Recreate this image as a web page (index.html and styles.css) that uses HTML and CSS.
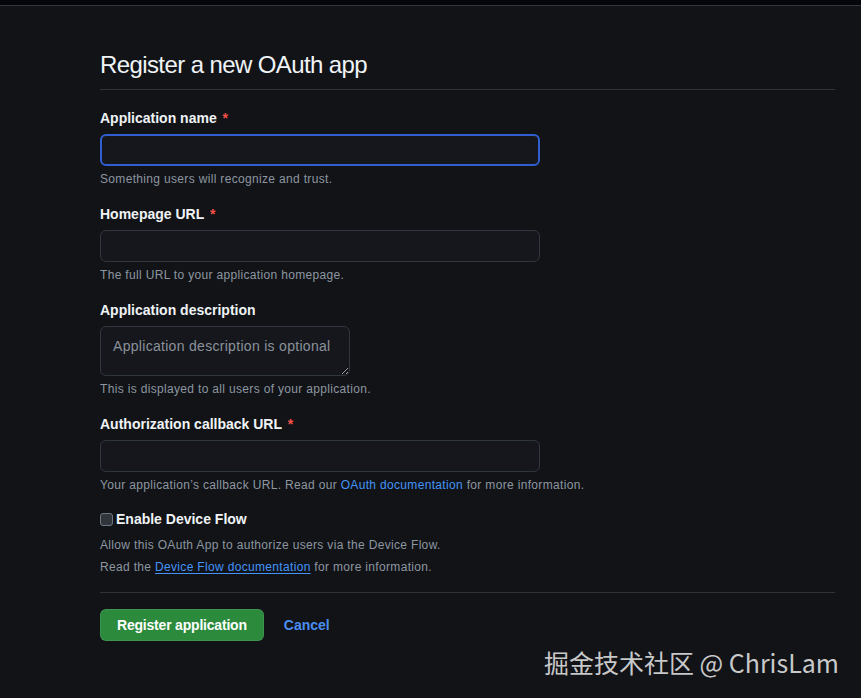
FILE: index.html
```html
<!DOCTYPE html>
<html lang="en">
<head>
<meta charset="utf-8">
<title>Register a new OAuth app</title>
<link rel="stylesheet" href="styles.css">
</head>
<body>
<div class="topbar"></div>
<main class="page">
  <h2 class="title">Register a new OAuth app</h2>
  <form class="form">
    <div class="group">
      <label class="label">Application name <span class="req">*</span></label>
      <input class="input input-focus" type="text">
      <p class="note">Something users will recognize and trust.</p>
    </div>
    <div class="group">
      <label class="label">Homepage URL <span class="req">*</span></label>
      <input class="input" type="text">
      <p class="note">The full URL to your application homepage.</p>
    </div>
    <div class="group">
      <label class="label">Application description</label>
      <textarea class="textarea" placeholder="Application description is optional"></textarea>
      <p class="note">This is displayed to all users of your application.</p>
    </div>
    <div class="group group-last">
      <label class="label">Authorization callback URL <span class="req">*</span></label>
      <input class="input" type="text">
      <p class="note">Your application’s callback URL. Read our <a class="link" href="#">OAuth documentation</a> for more information.</p>
    </div>
    <div class="group check-group">
      <label class="check-label"><input class="checkbox" type="checkbox">Enable Device Flow</label>
      <p class="note note-first">Allow this OAuth App to authorize users via the Device Flow.</p>
      <p class="note note-second">Read the <a class="link link-under" href="#">Device Flow documentation</a> for more information.</p>
    </div>
    <div class="actions">
      <button class="btn-primary" type="button">Register application</button>
      <a class="btn-cancel" href="#">Cancel</a>
    </div>
  </form>
</main>
<div class="watermark">掘金技术社区 @ ChrisLam</div>
</body>
</html>
```

FILE: styles.css
```css
* { box-sizing: border-box; }
html, body { margin: 0; padding: 0; }
body {
  background: #111317;
  color: #e6edf3;
  font-family: "Liberation Sans", Arial, sans-serif;
  font-size: 14px;
  height: 698px;
  overflow: hidden;
  position: relative;
}
.topbar {
  height: 6px;
  background: #05060b;
  border-bottom: 1px solid #34373e;
}
.page {
  width: 735px;
  margin-left: 100px;
  padding-top: 41px;
}
.title {
  margin: 0;
  font-size: 24px;
  font-weight: 400;
  line-height: 36px;
  letter-spacing: -0.6px;
  padding-bottom: 6px;
  border-bottom: 1px solid #30343a;
  color: #f0f3f6;
}
.form { padding-top: 18px; }
.group { margin-bottom: 16px; display: flex; flex-direction: column; align-items: flex-start; }
.group-last { margin-bottom: 15px; }
.label {
  font-weight: 700;
  line-height: 20px;
  margin-bottom: 6px;
  color: #f0f3f6;
}
.req { color: #f85149; margin-left: 2px; }
.input {
  width: 440px;
  height: 32px;
  background: #15171c;
  border: 1px solid #30363d;
  border-radius: 6px;
  color: #e6edf3;
  font-size: 14px;
  padding: 5px 12px;
  outline: none;
}
.input-focus {
  border: 2px solid #2f5fd0;
}
.textarea {
  width: 250px;
  height: 50px;
  background: #15171c;
  border: 1px solid #30363d;
  border-radius: 6px;
  color: #e6edf3;
  font-family: "Liberation Sans", Arial, sans-serif;
  font-size: 14px;
  line-height: 20px;
  letter-spacing: 0.3px;
  padding: 9px 12px;
  resize: vertical;
  outline: none;
}
.textarea::placeholder { color: #8b929b; }
.note {
  margin: 4px 0 0;
  font-size: 12px;
  line-height: 18px;
  letter-spacing: 0.33px;
  color: #8d96a0;
}
.link { color: #4493f8; text-decoration: none; }
.link-under { text-decoration: underline; text-underline-offset: 2px; }
.check-label {
  display: flex;
  align-items: center;
  font-weight: 700;
  line-height: 20px;
  color: #f0f3f6;
}
.checkbox {
  appearance: none;
  -webkit-appearance: none;
  width: 13px;
  height: 13px;
  margin: 0 3px 0 0;
  border: 1px solid #6e7681;
  border-radius: 3px;
  background: #30343b;
}
.note-first { margin-top: 7px; }
.note-second { margin-top: 4px; }
.check-group { margin-bottom: 0; padding-bottom: 16px; border-bottom: 1px solid #30343a; width: 735px; }
.actions {
  display: flex;
  align-items: center;
  gap: 20px;
  padding-top: 16px;
}
.btn-primary {
  height: 32px;
  padding: 0 16px;
  background: #2b8a3b;
  color: #ffffff;
  border: 1px solid rgba(240,246,252,0.1);
  border-radius: 6px;
  font-family: "Liberation Sans", Arial, sans-serif;
  font-size: 14px;
  font-weight: 700;
  letter-spacing: -0.2px;
}
.btn-cancel {
  color: #4a8ef0;
  font-weight: 700;
  text-decoration: none;
  font-size: 14px;
}
.watermark {
  position: absolute;
  right: 22px;
  top: 646px;
  font-family: "Noto Sans CJK SC", "Noto Sans", sans-serif;
  font-size: 25px;
  line-height: 32px;
  color: rgba(235,235,235,0.85);
}
```
